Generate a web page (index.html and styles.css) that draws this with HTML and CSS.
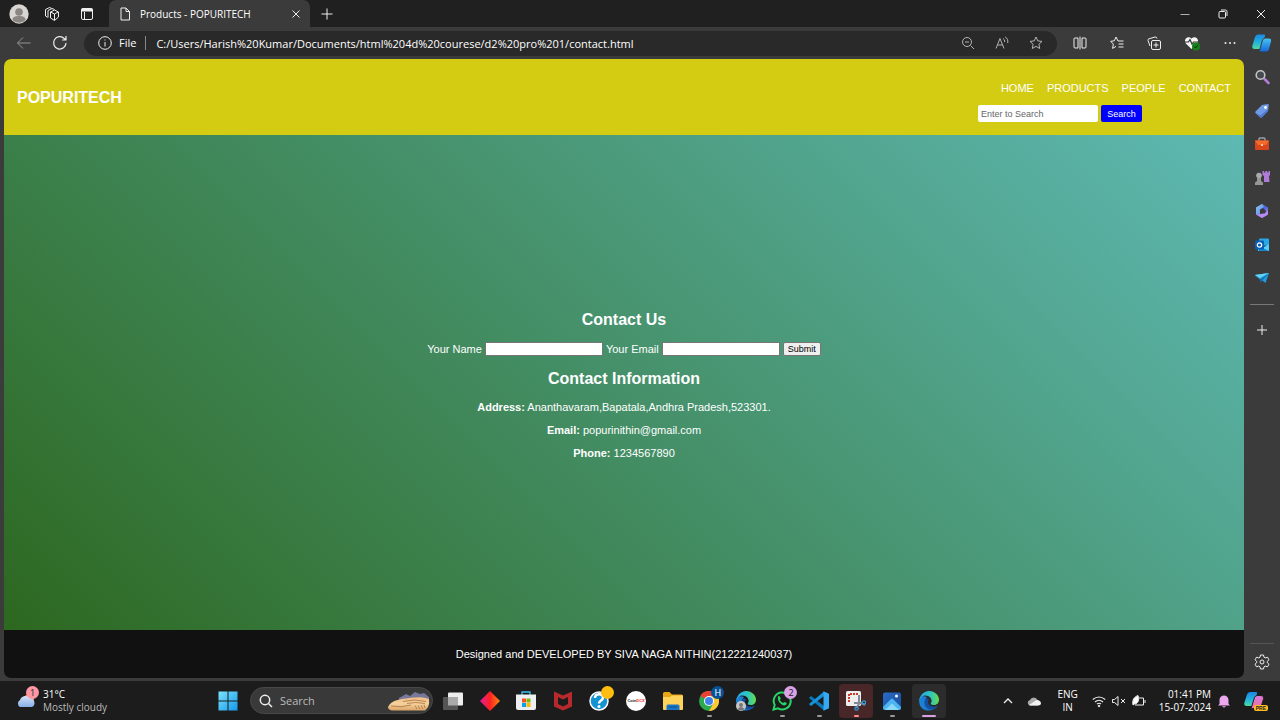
FILE: index.html
```html
<!DOCTYPE html>
<html lang="en">
<head>
<meta charset="utf-8">
<title>Products - POPURITECH</title>
<link rel="stylesheet" href="styles.css">
</head>
<body>
<svg width="0" height="0" class="defs" aria-hidden="true">
  <defs>
    <linearGradient id="copA" x1="0" y1="0" x2="0" y2="1"><stop offset="0" stop-color="#1c86e6"/><stop offset=".55" stop-color="#22b4dc"/><stop offset="1" stop-color="#4fd8a0"/></linearGradient>
    <linearGradient id="copB" x1="0" y1="0" x2="0" y2="1"><stop offset="0" stop-color="#48c6f4"/><stop offset="1" stop-color="#1464d8"/></linearGradient>
    <linearGradient id="copC" x1="0" y1="0" x2="0" y2="1"><stop offset="0" stop-color="#d77be0"/><stop offset="1" stop-color="#f0709a"/></linearGradient>
    <linearGradient id="win" x1="0" y1="0" x2="1" y2="1"><stop offset="0" stop-color="#7be3fb"/><stop offset="1" stop-color="#1499ec"/></linearGradient>
    <linearGradient id="red" x1="0" x2="1"><stop offset="0" stop-color="#e61ba0"/><stop offset=".5" stop-color="#ff2020"/><stop offset="1" stop-color="#ff8a10"/></linearGradient>
    <linearGradient id="edgeTop" x1="0" x2="1"><stop offset="0" stop-color="#2ba8e8"/><stop offset=".55" stop-color="#2cc5c4"/><stop offset="1" stop-color="#67dc4b"/></linearGradient>
    <linearGradient id="edgeLow" x1="0" x2="1"><stop offset="0" stop-color="#1b86d8"/><stop offset="1" stop-color="#1a68c0"/></linearGradient>
    <linearGradient id="m365" x1="0" y1="0" x2="1" y2="1"><stop offset="0" stop-color="#8fd0f5"/><stop offset=".5" stop-color="#4b62dc"/><stop offset="1" stop-color="#d48cf2"/></linearGradient>
    <linearGradient id="photo" x1="0" y1="0" x2="1" y2="1"><stop offset="0" stop-color="#2a6cc8"/><stop offset="1" stop-color="#174a9a"/></linearGradient>
    <linearGradient id="cloud" x1="0" y1="0" x2="0" y2="1"><stop offset="0" stop-color="#d3e2fa"/><stop offset="1" stop-color="#86aee8"/></linearGradient>
    <linearGradient id="sand" x1="0" y1="0" x2="0" y2="1"><stop offset="0" stop-color="#eebd85"/><stop offset=".5" stop-color="#f5d19d"/><stop offset="1" stop-color="#d9a566"/></linearGradient>
    <symbol id="edge" viewBox="0 0 20 20"><path d="M.2 11C-.5 5 4 4.500 8 6c-3 3-2.500 10 4 11.500 2.500.5 5-.5 6.500-2.500C15 21 1.500 22.500.2 11z" fill="url(#edgeLow)"/><path d="M7 8c-3.500 4-.5 10.500 5.500 10.500 2.700 0 5-1.500 6.300-4-4 2.500-9.300.8-9.800-3C8.800 10 9.500 9 10 8.500 9 7.500 8 7.300 7 8z" fill="#154f9f"/><path d="M.3 9.500C1.200 3.500 5.500 0 10 0c6 0 10 4.500 10 8.700 0 3.300-2.500 5.300-5.200 5.300-2.600 0-3.600-.8-2.900-1.700 2.300-3.200-.8-7.800-5.400-7.800-3 0-5.300 2-6.200 5z" fill="url(#edgeTop)"/></symbol>
  </defs>
</svg>

<div class="desktop">
  <header class="titlebar">
    <div class="title-left">
      <svg class="i20" viewBox="0 0 20 20"><circle cx="10" cy="10" r="9.700" fill="#d9d5d3"/><circle cx="10" cy="8" r="3.800" fill="#8b8684"/><path d="M3.500 16c0-3 2.300-4 6.500-4s6.500 1 6.500 4c-3.500 3.700-9.500 3.700-13 0z" fill="#8b8684"/></svg>
      <svg class="i16 line" viewBox="0 0 16 16"><path d="M6.500 6l4-2 4 2v5l-4 3.500-4-2.500zM6.500 6l4 2 3.500-2M10.500 8v6M4 11.500V4.500l4-2 2.500 1M1.500 10V3.500L5.500 1.500l2 .8M1.500 10l2 1.300"/></svg>
      <svg class="i16 line" viewBox="0 0 16 16"><rect x="2.500" y="2.500" width="11" height="11" rx="1.500"/><path d="M2.500 4h11" stroke-width="3"/><path d="M5.500 6v7"/></svg>
    </div>
    <div class="tab">
      <svg class="i14 line" viewBox="0 0 14 14"><path d="M3 1h5l3.500 3.500V13H3zM8 1v3.500h3.500"/></svg>
      <span class="tab-title">Products - POPURITECH</span>
      <button class="ghost" aria-label="Close tab"><svg class="i12 line" viewBox="0 0 12 12"><path d="M2.500 2.500l7 7M9.500 2.500l-7 7"/></svg></button>
    </div>
    <button class="ghost new-tab" aria-label="New tab"><svg class="i14 line" viewBox="0 0 14 14"><path d="M7 1.500v11M1.500 7h11"/></svg></button>
    <div class="window-buttons">
      <button class="ghost" aria-label="Minimize"><svg class="i12 line" viewBox="0 0 12 12"><path d="M1.500 6.500h9" opacity=".7"/></svg></button>
      <button class="ghost" aria-label="Restore"><svg class="i12 line" viewBox="0 0 12 12"><rect x="2" y="3.500" width="6.500" height="6.500" rx="1"/><path d="M4 2h4.500q1.500 0 1.500 1.500V8"/></svg></button>
      <button class="ghost" aria-label="Close"><svg class="i12 line" viewBox="0 0 12 12"><path d="M2 2l8 8M10 2l-8 8"/></svg></button>
    </div>
  </header>

  <div class="toolbar">
    <button class="ghost dim" aria-label="Back"><svg class="i16 line" viewBox="0 0 16 16"><path d="M14.500 8h-13M7 2.500L1.500 8 7 13.500"/></svg></button>
    <button class="ghost" aria-label="Refresh"><svg class="i16 line" viewBox="0 0 16 16"><path d="M14 8a6.200 6.200 0 1 1-1.800-4.500L14 5M14 1v4h-4" stroke-width="1.200"/></svg></button>
    <div class="address">
      <svg class="i14 line" viewBox="0 0 14 14"><circle cx="7" cy="7" r="6.300"/><path d="M7 6v4.500M7 3.500v1"/></svg>
      <span class="scheme">File</span>
      <input class="url" aria-label="Address" value="C:/Users/Harish%20Kumar/Documents/html%204d%20courese/d2%20pro%201/contact.html">
      <div class="address-icons">
        <button class="ghost" aria-label="Zoom"><svg class="i14 line" viewBox="0 0 14 14"><circle cx="6" cy="6" r="4.500"/><path d="M9.500 9.500L13 13M4 6h4"/></svg></button>
        <button class="ghost" aria-label="Read aloud"><svg class="i14 line" viewBox="0 0 14 14"><path d="M1 12.500L5 2.500l4 10M2.500 9h5M8 2.500q2 1 1.700 3.500M10 .8q3.500 2 2.700 6.200"/></svg></button>
        <button class="ghost" aria-label="Favorite"><svg class="i14 line" viewBox="0 0 14 14"><path d="M7 1l1.800 3.900 4.200.5-3.100 2.900.8 4.200L7 10.400l-3.700 2.100.8-4.200L1 5.400l4.200-.5z"/></svg></button>
      </div>
    </div>
    <div class="tools">
      <button class="ghost" aria-label="Split screen"><svg class="i14 line" viewBox="0 0 14 14"><path d="M5 2H2Q1 2 1 3v8q0 1 1 1h3M9 2h3q1 0 1 1v8q0 1-1 1H9M7 .5v13M5 2v10M9 2v10"/></svg></button>
      <button class="ghost" aria-label="Favorites"><svg class="i14 line" viewBox="0 0 14 14"><path d="M13.500 5H8L6 1 4.300 4.800.7 5.300l2.600 2.800-.7 4.300L6 10.400M8.500 8h5M8.500 11h5"/></svg></button>
      <button class="ghost" aria-label="Collections"><svg class="i14 line" viewBox="0 0 14 14"><rect x="4.500" y="4.500" width="9" height="9" rx="1.500"/><path d="M9 6.500v5M6.500 9h5M3 10L1 4.500q-.4-1.300 1-1.700L8 1q1.500-.3 2 1.500"/></svg></button>
      <button class="ghost" aria-label="Browser essentials"><svg class="i16" viewBox="0 0 16 16"><path d="M7.500 14L1.800 8.500C-1 4 4 0 7.500 3.500 11 0 16 4 13.200 8.500z" fill="#f5f5f5"/><path d="M1 7h3.500L6 4.500 8 9l1.500-2H14" fill="none" stroke="#333" stroke-width="1.200"/><circle cx="12" cy="11.500" r="4" fill="#15801a"/><path d="M10 11.500l1.500 1.500 2.500-3" fill="none" stroke="#052f05"/></svg></button>
      <button class="ghost" aria-label="Settings and more"><svg class="i14" viewBox="0 0 14 14" fill="#eee"><circle cx="2.500" cy="7" r="1"/><circle cx="7" cy="7" r="1"/><circle cx="11.500" cy="7" r="1"/></svg></button>
    </div>
    <button class="ghost rail-slot" aria-label="Copilot"><svg class="i20" viewBox="0 0 20 20"><path d="M6 1.500h6q1.500 0 1 1.500L9.700 14q-.7 2-2.700 2H2.500Q-.3 16 .3 13L3 4q.8-2.500 3-2.500z" fill="url(#copA)"/><path d="M13.500 5H17q3.300 0 2.700 3l-2.500 9q-.7 2-2.700 2H8.500q-1.500 0-1-1.500L10.500 7q.7-2 3-2z" fill="url(#copB)" stroke="#3b3b3b"/></svg></button>
  </div>

  <div class="middle">
    <div class="page">
      <div class="site-head">
        <h1>POPURITECH</h1>
        <div class="site-right">
          <nav><a href="#">HOME</a><a href="#">PRODUCTS</a><a href="#">PEOPLE</a><a href="#">CONTACT</a></nav>
          <form class="search"><input type="text" placeholder="Enter to Search" aria-label="Search"><button type="button">Search</button></form>
        </div>
      </div>
      <main>
        <h2>Contact Us</h2>
        <form class="contact">
          <label for="name">Your Name</label><input id="name" type="text">
          <label for="email">Your Email</label><input id="email" type="text">
          <button type="button">Submit</button>
        </form>
        <h2>Contact Information</h2>
        <p><strong>Address:</strong> Ananthavaram,Bapatala,Andhra Pradesh,523301.</p>
        <p><strong>Email:</strong> popurinithin@gmail.com</p>
        <p><strong>Phone:</strong> 1234567890</p>
      </main>
      <footer>Designed and DEVELOPED BY SIVA NAGA NITHIN(212221240037)</footer>
    </div>
    <aside class="rail">
      <div class="rail-apps">
        <svg class="i16" viewBox="0 0 16 16"><path d="M10.500 10l4 4" stroke="#b47ad8" stroke-width="2.500" stroke-linecap="round"/><circle cx="6.500" cy="6" r="4.300" fill="#454b50" stroke="#c4c4c4" stroke-width="1.600"/></svg>
        <svg class="i16" viewBox="0 0 16 16"><path d="M1.500 8.500L8 2l6-1 .8.800L14 8l-6 6.300q-1 .8-2 0L1.500 10q-.7-.8 0-1.500z" fill="#6f9ae6"/><path d="M1.500 10L6 14.300q1 .8 2 0L14 8l.3-2L6.500 12.500z" fill="#4f76cc"/><circle cx="11.500" cy="4.500" r="1.400" fill="#fff"/></svg>
        <svg class="i16" viewBox="0 0 16 16"><path d="M5 5V3q0-1 1-1h4q1 0 1 1v2" fill="none" stroke="#9aa0a6" stroke-width="1.400"/><path d="M1 4.500h14V13q0 1-1 1H2q-1 0-1-1z" fill="#d8461b"/><path d="M1 4.500h14L12 9H4z" fill="#f26a2c"/><path d="M7 8h2v2H7z" fill="#ffc199"/></svg>
        <svg class="i16" viewBox="0 0 16 16"><path d="M8.500 1H10v1.500h1.300V1h1.900v1.500h1.300V1H16v4l-1 1 .5 6H10V6L8.500 5z" fill="#b07bd8"/><circle cx="5" cy="5.500" r="2.800" fill="#aaa"/><path d="M3 8h4v3l2 1.500V15H1v-2.500L3 11z" fill="#969696"/></svg>
        <svg class="i16" viewBox="0 0 16 16"><path d="M8 1l6 3.500v7L8 15l-6-3.500v-7z" fill="url(#m365)"/><path d="M6 6.500l3-1.500 3 3-1 2.500-5 .5z" fill="#3b3b3b"/><path d="M2 4.500L8 1l1.500 3L6 6.500V11l-4 .5z" fill="#83bff0" opacity=".6"/><path d="M2 11.500l9-1 3-3v4L8 15z" fill="#b98af0"/></svg>
        <svg class="i16" viewBox="0 0 16 16"><rect x="5" y="1.500" width="10" height="7" rx="1" fill="#28a8ea"/><path d="M4 14V8l6 2 5-3v7z" fill="#50d0ff"/><path d="M4 9l11 5H5z" fill="#1687cf"/><rect x="1" y="3.500" width="9" height="9" rx="1" fill="#075eb3"/><circle cx="5.500" cy="8" r="2.200" fill="none" stroke="#fff" stroke-width="1.200"/></svg>
        <svg class="i16" viewBox="0 0 16 16"><path d="M1 5l14-2-5.500 5L7 10z" fill="#48c4ef"/><path d="M15 3l-3.500 10L7 9.500zM1 5l5 4.500L15 3z" fill="#249bdc"/><path d="M1 5l14-2-9 5z" fill="#62d2f5"/><path d="M6 9.500L15 3 8 10.500 6.500 13z" fill="#0c6eb4"/></svg>
      </div>
      <hr>
      <button class="ghost" aria-label="Customize"><svg class="i14 line" viewBox="0 0 14 14"><path d="M7 2v10M2 7h10"/></svg></button>
      <hr class="last">
      <button class="ghost" aria-label="Settings"><svg class="i16 line" viewBox="0 0 16 16"><path d="M6.500 1h3l.5 2.200 1.300.7 2.200-.7L15 5.800 13.300 7.300v1.400L15 10.200l-1.500 2.600-2.200-.7-1.300.7L9.500 15h-3L6 12.800l-1.300-.7-2.200.7L1 10.200l1.700-1.500V7.300L1 5.800l1.500-2.600 2.200.7L6 3.200z"/><circle cx="8" cy="8" r="2"/></svg></button>
    </aside>
  </div>

  <div class="taskbar">
    <div class="weather">
      <div class="app">
        <svg class="i20" viewBox="0 0 20 20"><circle cx="13" cy="8" r="5" fill="#f1902d"/><path d="M4 16a4 4 0 0 1 0-7 6 6 0 0 1 10.500-1.500A4.500 4.500 0 0 1 16 16z" fill="url(#cloud)"/></svg>
        <span class="badge pink">1</span>
      </div>
      <div class="two-line"><span>31°C</span><span class="soft">Mostly cloudy</span></div>
    </div>
    <div class="start"><svg class="i20" viewBox="0 0 20 20" fill="url(#win)"><path d="M.5.500h9v9h-9zM10.500.500h9v9h-9zM.5 10.500h9v9h-9zM10.500 10.500h9v9h-9z"/></svg></div>
    <div class="task-search">
      <svg class="i14 line" viewBox="0 0 14 14"><circle cx="6" cy="6" r="4.700" stroke-width="1.500"/><path d="M9.500 9.500L13 13" stroke-width="1.500"/></svg>
      <input type="text" placeholder="Search" aria-label="Taskbar search">
      <svg class="dune" viewBox="0 0 44 22"><path d="M12 8l7-4 4 2 5-4 5 2 4-1 5 4v6H12z" fill="#77789a"/><path d="M1 17C4 10 14 9 22 8c8-1 15-1 20 1q1 8-4 11.500H5q-4-1-4-3.500z" fill="url(#sand)"/><path d="M16 11.500q12-3 23 0M20 13.500q8-2 18 0M28 15.500l2 3.500M31 15.500l2 3.500M34 15l2 4M37 14.500l1 3.500M4 16q10 2 20-1" fill="none" stroke="#ad713d" stroke-width=".8"/></svg>
    </div>
    <div class="apps">
      <div class="app"><svg class="i20" viewBox="0 0 20 20"><rect x="5" y="1.500" width="15" height="13" rx="1" fill="#eee"/><rect y="6" width="15" height="13" rx="1" fill="#555"/><path d="M5 6h10v8.500H5z" fill="#aaa"/></svg></div>
      <div class="app"><svg class="i20" viewBox="0 0 20 20"><path d="M10 0l10 10-10 10L0 10z" fill="url(#red)"/></svg></div>
      <div class="app"><svg class="i20" viewBox="0 0 20 20"><path d="M6 4V1h8v3" fill="none" stroke="#38bdf2" stroke-width="1.300"/><path d="M0 3.500h20V17q0 2-2 2H2q-2 0-2-2z" fill="#eceef1"/><path d="M6 7.500h4v4H6z" fill="#f25022"/><path d="M10.500 7.500h4v4h-4z" fill="#7fba00"/><path d="M6 12h4v4H6z" fill="#00a4ef"/><path d="M10.500 12h4v4h-4z" fill="#ffb900"/></svg></div>
      <div class="app"><svg class="i20" viewBox="0 0 20 20"><path d="M1 .5l9 4 9-4v15l-9 4-9-4zM5 6v7l5 2.500 5-2.500V6l-5 2.500z" fill="#b8292e" fill-rule="evenodd"/></svg></div>
      <div class="app"><svg class="i20" viewBox="0 0 20 20"><circle cx="10" cy="10" r="9" fill="#1293d2" stroke="#fff" stroke-width="1.500"/><path d="M6 7c0-5 8-5 8-.5 0 3-4 3-4 6" fill="none" stroke="#fff" stroke-width="2.400"/><circle cx="10" cy="15.500" r="1.500" fill="#fff"/></svg><span class="badge yellow"></span></div>
      <div class="app"><span class="coin"><span>Coin</span><span class="dcx">DCX</span></span></div>
      <div class="app"><svg class="i20" viewBox="0 0 20 20"><path d="M0 2.500q0-1.500 1.500-1.500h5L9 3.500h9.500q1.500 0 1.500 1.500v12.500q0 1.500-1.500 1.500h-17Q0 19 0 17.500z" fill="#e8a514"/><path d="M0 6h7l2-1.500h11V17.500q0 1.500-1.500 1.500h-17Q0 19 0 17.500z" fill="#ffd35a"/><path d="M3.500 19v-4q0-1.500 1.500-1.500h10q1.500 0 1.500 1.500v4z" fill="#1975c8"/><path d="M6 16h8" stroke="#0d4e8f"/></svg></div>
      <div class="app run"><svg class="i20" viewBox="0 0 20 20"><circle cx="10" cy="10" r="10" fill="#2da94f"/><path d="M10 10L1.300 5A10 10 0 0 1 18.700 5z" fill="#e94235"/><path d="M10 5h8.700A10 10 0 0 1 10 20l4.400-7.500z" fill="#fcc934"/><circle cx="10" cy="10" r="5" fill="#fff"/><circle cx="10" cy="10" r="4" fill="#3f82ec"/></svg><span class="badge navy">H</span></div>
      <div class="app"><svg class="i20"><use href="#edge"/></svg><svg class="user" viewBox="0 0 10 10"><circle cx="5" cy="5" r="5" fill="#c9c7c5"/><circle cx="5" cy="4" r="2" fill="#777"/><path d="M1.500 8q3.500-4 7 0-3.500 3-7 0" fill="#777"/></svg></div>
      <div class="app run"><svg class="i20" viewBox="0 0 20 20"><path d="M1.500 18.500l1.200-4.600A8.500 8.500 0 1 1 6 17.300z" fill="none" stroke="#28d366" stroke-width="2"/><path d="M6 5.500q1-1 1.800 0l1 2.200-1 1.400q1 2 3.300 3l1.300-1.200 2.400 1.200q0 2.400-2.500 2.400C9 14 5 10 6 5.500z" fill="#28d366"/></svg><span class="badge lilac">2</span></div>
      <div class="app run"><svg class="i20" viewBox="0 0 20 20"><path d="M0 7l2-2 13 10v4.500L0 7z" fill="#0879bd"/><path d="M0 13l2 2L15 5V.5z" fill="#1593db"/><path d="M14.500.3L20 2.800v14.400l-5.500 2.500z" fill="#35a9f4"/></svg></div>
      <div class="app run snip"><svg class="i20" viewBox="0 0 20 20"><rect width="15" height="15" rx="1.500" fill="#eee"/><path d="M3 11V3h9" fill="none" stroke="#cc3a28" stroke-width="2" stroke-dasharray="2 1"/><path d="M13 4v9l-3 4M8 12h7l4 2" fill="none" stroke="#7e8a96" stroke-width="2"/><circle cx="10.500" cy="17.500" r="1.700" fill="none" stroke="#2e99d5" stroke-width="1.300"/><circle cx="18" cy="11.500" r="1.700" fill="none" stroke="#2e99d5" stroke-width="1.300"/></svg></div>
      <div class="app run"><svg class="i20" viewBox="0 0 20 20"><rect x="1" y="1.500" width="18" height="17.500" rx="2" fill="url(#photo)"/><path d="M1 16l8-8q1-.8 2 0l8 8v1q0 2-2 2H3q-2 0-2-2z" fill="#4cb4ef"/><path d="M3 19l7-6.500 7 6.500z" fill="#8ad9fb"/><circle cx="14.500" cy="5" r="1.500" fill="#fff"/></svg></div>
      <div class="app run active"><svg class="i20"><use href="#edge"/></svg></div>
    </div>
    <div class="tray">
      <svg class="i12 line" viewBox="0 0 12 12"><path d="M2 8l4-4 4 4" stroke-width="1.300"/></svg>
      <svg class="i14 cloud" viewBox="0 0 14 14"><path d="M3 11.500a2.800 2.800 0 0 1 0-5.500A4 4 0 0 1 10.500 6 3 3 0 0 1 11 11.500z" fill="#aaa"/><path d="M2 11l6-4q2-1.500 4-.5 2 1 2 2.500 0 2.500-3 2.500H3z" fill="#f1f1f1"/></svg>
      <div class="two-line lang"><span>ENG</span><span>IN</span></div>
      <div class="status">
        <svg class="i14 line" viewBox="0 0 14 14"><path d="M.8 5.500q6.200-5 12.400 0M3 8q4-3.500 8 0M5 10q2-1.500 4 0" stroke-width="1.200"/><circle cx="7" cy="12" r=".8" fill="#fff"/></svg>
        <svg class="i14 line" viewBox="0 0 14 14"><path d="M.5 5.500h2L6 2.500v9l-3.500-3h-2zM9 5l4 4M13 5L9 9"/></svg>
        <svg class="i14 line" viewBox="0 0 14 14"><path d="M7 4h4.500v7H3M13 6v3"/><path d="M1 11C0 6 2 3 6 1.500 7.500 6 6 10 2.500 10z" fill="#fff"/></svg>
      </div>
      <div class="two-line clock"><span>01:41 PM</span><span>15-07-2024</span></div>
      <svg class="i14" viewBox="0 0 14 14"><path d="M2.500 10V6a4.500 4.500 0 0 1 9 0v4l1.500 1.500H1zM5 12.300h4q-2 2.500-4 0" fill="#eba8ef"/></svg>
      <div class="app pre"><svg class="i20" viewBox="0 0 20 20"><path d="M6 1h6q1.500 0 1 1.500L9.700 13q-.7 2-2.700 2H2.500Q-.3 15 .3 12L3 3.500Q3.800 1 6 1z" fill="url(#copA)"/><path d="M13.500 4.500H17q3.300 0 2.700 3l-2.500 8q-.7 2-2.700 2H8.500q-1.500 0-1-1.500l3-9.500q.7-2 3-2z" fill="url(#copC)" stroke="#1c1c1c"/></svg><span class="pre-tag">PRE</span></div>
    </div>
  </div>
</div>
</body>
</html>
```

FILE: styles.css
```css
* { box-sizing: border-box; }
body { margin: 0; background: #3b3b3b; color: #fff; font: 11px "Noto Sans", sans-serif; }
svg { display: block; flex: none; }
.defs { position: absolute; }
.i12 { width: 12px; height: 12px; }
.i14 { width: 14px; height: 14px; }
.i16 { width: 16px; height: 16px; }
.i20 { width: 20px; height: 20px; }
.line { fill: none; stroke: #eee; stroke-width: 1; }
.ghost { display: flex; align-items: center; justify-content: center; padding: 0; border: 0; background: none; color: inherit; }
.dim { opacity: .5; }
.desktop { min-height: 100vh; display: flex; flex-direction: column; }

.titlebar { height: 27px; display: flex; align-items: center; background: #202020; }
.title-left { width: 109px; display: flex; align-items: center; gap: 15px; padding-left: 9px; }
.title-left .i16 { margin-right: 4px; }
.tab { width: 201px; height: 27px; display: flex; align-items: center; gap: 8px; padding: 0 8px 0 9px; background: #3b3b3b; border-radius: 7px 7px 0 0; }
.tab-title { flex: 1; font-size: 10px; font-family: "Open Sans", sans-serif; white-space: nowrap; }
.new-tab { margin-left: 10px; }
.window-buttons { display: flex; gap: 26px; margin-left: auto; padding-right: 13px; }

.toolbar { height: 32px; display: flex; align-items: center; gap: 20px; padding-left: 16px; }
.address { flex: 1; height: 25px; display: flex; align-items: center; margin-left: -4px; padding: 0 14px; border-radius: 13px; background: #292929; font: 11px "Open Sans", sans-serif; }
.scheme { margin-left: 7px; padding-right: 9px; border-right: 1px solid #888; line-height: 14px; }
.url { flex: 1; min-width: 0; margin-left: 10px; padding: 0; border: 0; background: none; color: #fff; font: inherit; }
.address-icons { display: flex; gap: 20px; opacity: .7; }
.tools { display: flex; align-items: center; gap: 23px; margin-left: -4px; }
.rail-slot { width: 36px; margin-left: -13px; }

.middle { flex: 1; display: flex; }
.page { flex: 1; display: flex; flex-direction: column; margin: 0 0 3px 4px; overflow: hidden; border-radius: 7px; background: #111; font: 11px "Liberation Sans", Arial, sans-serif; }
.site-head { height: 76px; display: flex; align-items: center; justify-content: space-between; padding: 1px 13px 0; background: #d4cc12; }
h1 { margin: 0; font-size: 16px; }
.site-right { width: 253px; display: flex; flex-direction: column; gap: 11px; padding-top: 9px; }
nav { display: flex; justify-content: flex-end; gap: 13px; }
nav a { color: #fff; text-decoration: none; }
.search { display: flex; gap: 3px; }
.search input { width: 120px; height: 17px; padding: 0 3px; border: 0; border-radius: 2px; font: 9px "Liberation Sans", Arial, sans-serif; }
.search input::placeholder { color: #666; }
.search button { width: 41px; height: 17px; padding: 0; border: 0; border-radius: 2px; background: #00f; color: #fff; font: 9px "Liberation Sans", Arial, sans-serif; }
main { flex: 1; display: flex; flex-direction: column; align-items: center; justify-content: center; padding-top: 15px; background: linear-gradient(45deg, #2d6820, #5eb9b3); }
h2 { margin: 0 0 13px; font-size: 16px; line-height: 18px; }
.contact { display: flex; align-items: center; gap: 3px; margin-bottom: 14px; }
.contact input { width: 118px; height: 14px; padding: 0 2px; border: 1px solid #767676; font: 9px "Liberation Sans", Arial, sans-serif; }
.contact button { width: 38px; height: 14px; padding: 0; border: 1px solid #767676; border-radius: 2px; background: #efefef; color: #000; font: 9px "Liberation Sans", Arial, sans-serif; }
main p { margin: 0 0 10px; line-height: 13px; }
footer { height: 48px; display: flex; align-items: center; justify-content: center; padding-bottom: 1px; }

.rail { width: 36px; display: flex; flex-direction: column; align-items: center; gap: 17px; padding: 10px 0 11px; }
.rail-apps { height: 217px; display: flex; flex-direction: column; justify-content: space-between; }
.rail hr { width: 24px; margin: 1px 0; border: 0; border-top: 1px solid #777; }
.rail .last { margin: auto 0 -7px; border-color: #555; }

.taskbar { height: 39px; display: flex; align-items: center; background: #1c1c1c; }
.app { position: relative; width: 34px; height: 34px; display: flex; flex: none; align-items: center; justify-content: center; border-radius: 4px; }
.badge { position: absolute; top: 2px; right: 2px; width: 13px; height: 13px; border-radius: 50%; font-size: 9px; line-height: 13px; text-align: center; }
.pink { background: #ff98a4; color: #333; }
.yellow { background: #ffbd12; }
.navy { background: #075297; }
.lilac { background: #d9a2e8; color: #222; }
.weather { width: 211px; display: flex; align-items: center; padding-left: 9px; }
.weather .badge { right: 4px; }
.two-line { display: flex; flex-direction: column; font: 10px/13px "Open Sans", sans-serif; white-space: nowrap; }
.soft { color: #bbb; }
.start { width: 39px; padding-left: 7px; }
.task-search { width: 183px; height: 27px; display: flex; align-items: center; gap: 7px; padding: 0 1px 0 8px; border: 1px solid #484848; border-radius: 14px; background: #393939; }
.task-search input { flex: 1; min-width: 0; padding: 0; border: 0; background: none; color: #fff; font: 11px "Open Sans", sans-serif; }
.task-search input::placeholder { color: #bbb; }
.dune { width: 44px; height: 22px; }
.apps { flex: none; width: 510px; display: flex; justify-content: space-between; margin-left: 3px; }
.run::after { content: ""; position: absolute; bottom: 1px; left: 15px; width: 5px; height: 2px; border-radius: 1px; background: #999; }
.coin { width: 20px; height: 20px; display: flex; align-items: center; justify-content: center; border-radius: 50%; background: #fff; color: #222; font: bold 4px "Liberation Sans", sans-serif; }
.dcx { color: #e22; }
.user { position: absolute; left: 7px; bottom: 7px; width: 10px; height: 10px; }
.snip { background: #492627; }
.snip::after { background: #ff8d8d; }
.active { background: #2c2c2c; }
.active::after { left: 10px; width: 14px; background: #d8a0e0; }
.tray { display: flex; align-items: center; margin-left: auto; padding-right: 9px; }
.cloud { margin-left: 13px; }
.lang { align-items: center; margin: 0 14px 0 16px; }
.status { display: flex; gap: 6px; }
.clock { align-items: flex-end; margin: 0 6px 0 13px; }
.pre { margin-left: 6px; }
.pre-tag { position: absolute; right: 3px; bottom: 7px; padding: 0 2px; border-radius: 2px; background: #ffbd22; color: #222; font: bold 5px/6px "Liberation Sans", sans-serif; }
```
